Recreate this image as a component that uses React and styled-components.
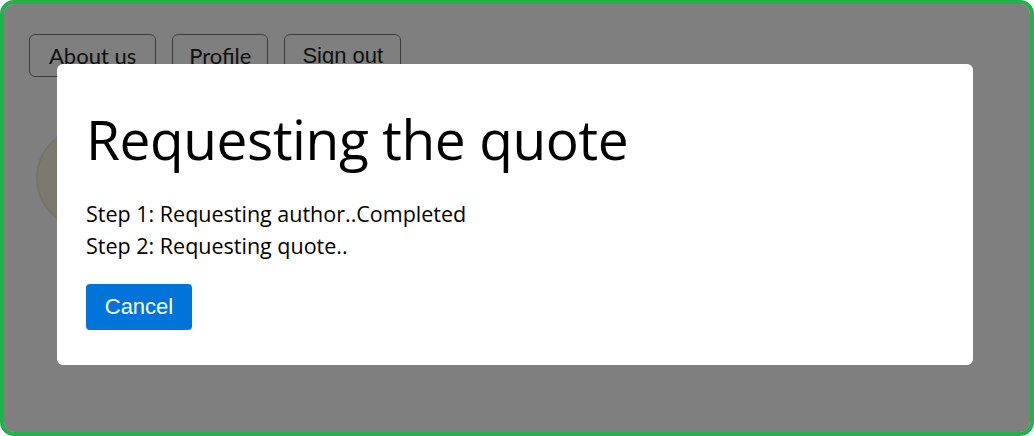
import styled, { createGlobalStyle } from "styled-components";

const GlobalStyle = createGlobalStyle`
    html, body {
        margin: 0;
        padding: 0;
        background: #fff;
    }
    * {
        box-sizing: border-box;
    }
`;

const Frame = styled.div`
    position: relative;
    width: 1034px;
    height: 436px;
    border: 4px solid #22b24c;
    border-radius: 14px;
    overflow: hidden;
    background: #fff;
`;

const Page = styled.div`
    padding: 30px 0 0 25px;
`;

const Nav = styled.nav`
    display: flex;
    gap: 16px;
`;

const NavButton = styled.button`
    height: 43px;
    padding: 0 ${props => props.$pad || 19}px;
    background: #fff;
    border: 1px solid #7a7a7a;
    border-radius: 6px;
    color: #222;
    font-family: ${props => props.$arial ? '"Liberation Sans", Arial' : 'Lato, "Noto Sans"'}, sans-serif;
    font-size: 22px;
    line-height: 1;
`;

const Avatar = styled.div`
    width: 102px;
    height: 102px;
    margin: 50px 0 0 7px;
    border-radius: 50%;
    background: #f4f4dc;
    border: 2px solid #eaeacc;
`;

const Overlay = styled.div`
    position: absolute;
    inset: 0;
    background: rgba(0, 0, 0, 0.5);
    padding: 60px 0 0 53px;
`;

const Modal = styled.div`
    width: 916px;
    height: 301px;
    background: #fff;
    border-radius: 6px;
    padding: 47px 29px 0 29px;
`;

const Title = styled.h1`
    margin: 0 0 32px;
    font-family: "Open Sans", "Noto Sans", sans-serif;
    font-weight: 400;
    font-size: 55px;
    line-height: 1;
    color: #000;
    letter-spacing: -0.4px;
`;

const Step = styled.p`
    margin: 0;
    font-family: "Open Sans", "Noto Sans", sans-serif;
    font-size: 21.5px;
    line-height: 32px;
    color: #000;
`;

const CancelButton = styled.button`
    margin-top: 22px;
    width: 106px;
    height: 46px;
    border: none;
    border-radius: 4px;
    background: #0074d9;
    color: #fff;
    font-family: "Liberation Sans", Arial, sans-serif;
    font-size: 22px;
`;

export default function App() {
    return (
        <>
            <GlobalStyle />
            <Frame>
                <Page>
                    <Nav>
                        <NavButton>About us</NavButton>
                        <NavButton $pad={16}>Profile</NavButton>
                        <NavButton $arial $pad={17}>Sign out</NavButton>
                    </Nav>
                    <Avatar />
                </Page>
                <Overlay>
                    <Modal>
                        <Title>Requesting the quote</Title>
                        <Step>Step 1: Requesting author..Completed</Step>
                        <Step>Step 2: Requesting quote..</Step>
                        <CancelButton>Cancel</CancelButton>
                    </Modal>
                </Overlay>
            </Frame>
        </>
    );
}
